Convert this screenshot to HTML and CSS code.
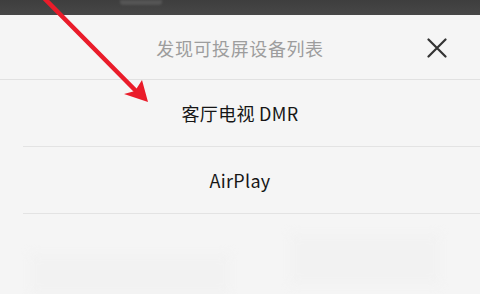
FILE: index.html
```html
<!DOCTYPE html>
<html lang="zh">
<head>
<meta charset="utf-8">
<link rel="stylesheet" href="styles.css">
</head>
<body>
<div class="screen">
  <div class="topbar"><span class="topbar-blob"></span></div>
  <div class="sheet">
    <div class="header">
      <span class="title">发现可投屏设备列表</span>
      <span class="close" aria-label="关闭">
        <svg width="20" height="20" viewBox="0 0 20 20"><path d="M1.5 1.5 L18.5 18.5 M18.5 1.5 L1.5 18.5" stroke="#333" stroke-width="2.2" stroke-linecap="round" fill="none"/></svg>
      </span>
    </div>
    <div class="row">客厅电视 DMR</div>
    <div class="row">AirPlay</div>
    <div class="below">
      <div class="ghost ghost-a"></div>
      <div class="ghost ghost-b"></div>
    </div>
  </div>
  <svg class="arrow" width="160" height="110" viewBox="0 0 160 110">
    <path d="M42 -4 L138 93" stroke="#ea1c2a" stroke-width="4.5" stroke-linecap="round" fill="none"/>
    <path d="M148 102 L124 94 L135 91 L142 80 Z" fill="#ea1c2a"/>
  </svg>
</div>
</body>
</html>
```
FILE: styles.css
```css
* { box-sizing: border-box; }
html, body { margin: 0; padding: 0; }
body {
  width: 480px;
  height: 294px;
  overflow: hidden;
  background: #f5f5f5;
  font-family: "Noto Sans CJK SC", "Noto Sans", sans-serif;
}
.screen {
  position: relative;
  width: 480px;
  height: 294px;
  display: flex;
  flex-direction: column;
}
.topbar {
  height: 15px;
  background: linear-gradient(#3e3e3e, #474747);
  display: flex;
  padding-left: 120px;
  flex: none;
}
.topbar-blob {
  width: 42px;
  height: 5px;
  background: #555;
  border-radius: 0 0 3px 3px;
  filter: blur(1px);
}
.sheet {
  flex: 1;
  background: #f5f5f5;
  display: flex;
  flex-direction: column;
}
.header {
  position: relative;
  height: 65px;
  border-bottom: 1px solid #e1e1e1;
  display: flex;
  align-items: center;
  justify-content: center;
}
.title {
  font-size: 18px;
  letter-spacing: 0.6px;
  color: #9d9d9d;
  margin-top: 1px;
}
.close {
  position: absolute;
  right: 33px;
  top: 23px;
  width: 20px;
  height: 20px;
  display: flex;
}
.row {
  height: 67px;
  margin-left: 23px;
  padding-right: 23px;
  border-bottom: 1px solid #e3e3e3;
  display: flex;
  align-items: center;
  justify-content: center;
  font-size: 18px;
  color: #161616;
  letter-spacing: 0.3px;
}
.below {
  flex: 1;
  position: relative;
  display: flex;
  gap: 60px;
  padding: 40px 0 0 30px;
}
.ghost {
  background: #f2f2f2;
  filter: blur(5px);
  border-radius: 4px;
}
.ghost-a { width: 200px; height: 40px; }
.ghost-b { width: 150px; height: 50px; margin-top: -20px; }
.arrow {
  position: absolute;
  left: 0;
  top: 0;
}
```
